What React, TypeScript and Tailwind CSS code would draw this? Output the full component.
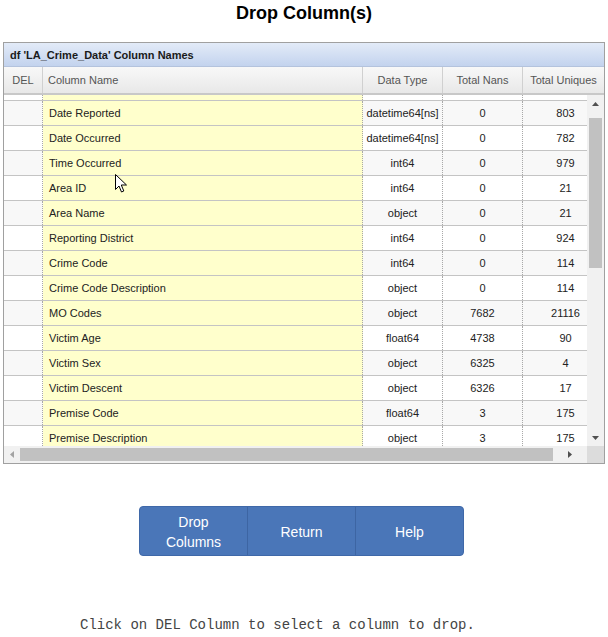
import React from "react"

type Row = { name: string; type: string; nans: string; uniques: string }

const rows: Row[] = [
  { name: "Date Reported", type: "datetime64[ns]", nans: "0", uniques: "803" },
  { name: "Date Occurred", type: "datetime64[ns]", nans: "0", uniques: "782" },
  { name: "Time Occurred", type: "int64", nans: "0", uniques: "979" },
  { name: "Area ID", type: "int64", nans: "0", uniques: "21" },
  { name: "Area Name", type: "object", nans: "0", uniques: "21" },
  { name: "Reporting District", type: "int64", nans: "0", uniques: "924" },
  { name: "Crime Code", type: "int64", nans: "0", uniques: "114" },
  { name: "Crime Code Description", type: "object", nans: "0", uniques: "114" },
  { name: "MO Codes", type: "object", nans: "7682", uniques: "21116" },
  { name: "Victim Age", type: "float64", nans: "4738", uniques: "90" },
  { name: "Victim Sex", type: "object", nans: "6325", uniques: "4" },
  { name: "Victim Descent", type: "object", nans: "6326", uniques: "17" },
  { name: "Premise Code", type: "float64", nans: "3", uniques: "175" },
  { name: "Premise Description", type: "object", nans: "3", uniques: "175" },
]

function Arrow({ dir, color }: { dir: "up" | "down" | "left" | "right"; color: string }) {
  const pts = {
    up: "0,4 3.5,0 7,4",
    down: "0,0 3.5,4 7,0",
    left: "4,0 0,3.5 4,7",
    right: "0,0 4,3.5 0,7",
  }[dir]
  const vertical = dir === "up" || dir === "down"
  return (
    <svg width={vertical ? 7 : 4} height={vertical ? 4 : 7} viewBox={vertical ? "0 0 7 4" : "0 0 4 7"}>
      <polygon points={pts} fill={color} />
    </svg>
  )
}

function Cells({ row }: { row?: Row }) {
  return (
    <>
      <div className="w-[39px] shrink-0 border-r border-dotted border-[#a8a8a8]" />
      <div className="w-[320px] shrink-0 flex items-center pl-[6px] bg-[#ffffcc] border-r border-dotted border-[#a8a8a8]">
        {row?.name}
      </div>
      <div className="w-[80px] shrink-0 flex items-center justify-center border-r border-dotted border-[#a8a8a8]">
        {row?.type}
      </div>
      <div className="w-[80px] shrink-0 flex items-center justify-center border-r border-dotted border-[#a8a8a8]">
        {row?.nans}
      </div>
      <div className="w-[85px] shrink-0 flex items-center justify-center">{row?.uniques}</div>
    </>
  )
}

export default function App() {
  return (
    <div className="relative w-[608px] h-[637px] bg-white font-['Liberation_Sans',Arial,sans-serif] text-[#222]">
      {/* Title */}
      <h1 className="h-[42px] pt-[3px] text-center text-[18px] leading-[21px] font-bold text-black">
        Drop Column(s)
      </h1>

      {/* Grid */}
      <div className="ml-[3px] w-[602px] border border-[#a0a0a0]">
        <div className="h-[24px] flex items-center pl-[6px] pt-[1px] bg-gradient-to-b from-[#e3ebf8] to-[#c3d3ee] border-b border-[#b4c3dd] text-[11px] font-bold text-[#1a1a1a]">
          df 'LA_Crime_Data' Column Names
        </div>

        {/* Header */}
        <div className="h-[28px] border-b-2 border-[#c8c8c8] bg-gradient-to-b from-[#f8f8f8] to-[#e8e8e8] text-[11px] text-[#555] overflow-hidden">
          <div className="flex w-[600px] h-full">
            <div className="w-[39px] shrink-0 flex items-center justify-center border-r border-[#d0d0d0]">DEL</div>
            <div className="w-[320px] shrink-0 flex items-center pl-[5px] border-r border-[#d0d0d0]">Column Name</div>
            <div className="w-[80px] shrink-0 flex items-center justify-center border-r border-[#d0d0d0]">Data Type</div>
            <div className="w-[80px] shrink-0 flex items-center justify-center border-r border-[#d0d0d0]">Total Nans</div>
            <div className="flex-1 flex items-center justify-center">Total Uniques</div>
          </div>
        </div>

        {/* Body */}
        <div className="flex h-[351px]">
          <div className="w-[583px] h-full overflow-hidden">
            <div className="w-[604px]">
              {/* bottom edge of the row scrolled above the view */}
              <div className="flex h-[6px] border-b border-[#c4c4c4] bg-white">
                <Cells />
              </div>
              {rows.map((r, i) => (
                <div
                  key={r.name}
                  className={`flex h-[25px] border-b border-[#c4c4c4] text-[11px] ${i % 2 === 0 ? "bg-[#f8f8f8]" : "bg-white"}`}
                >
                  <Cells row={r} />
                </div>
              ))}
            </div>
          </div>

          {/* Vertical scrollbar */}
          <div className="w-[17px] h-full bg-[#f1f1f1] flex flex-col items-center">
            <div className="h-[17px] w-full flex items-center justify-center">
              <Arrow dir="up" color="#505050" />
            </div>
            <div className="mt-[6px] w-[13px] h-[150px] bg-[#c1c1c1]" />
            <div className="flex-1" />
            <div className="h-[17px] w-full flex items-center justify-center">
              <Arrow dir="down" color="#505050" />
            </div>
          </div>
        </div>

        {/* Horizontal scrollbar */}
        <div className="flex h-[17px]">
          <div className="w-[583px] h-full bg-[#f1f1f1] flex items-center">
            <div className="w-[16px] h-full flex items-center justify-center">
              <Arrow dir="left" color="#a3a3a3" />
            </div>
            <div className="w-[533px] h-[13px] bg-[#c1c1c1]" />
            <div className="flex-1 h-full flex items-center justify-center">
              <Arrow dir="right" color="#505050" />
            </div>
          </div>
          <div className="w-[17px] h-full bg-[#dcdcdc]" />
        </div>
      </div>

      {/* Buttons */}
      <div className="mt-[42px] flex justify-center pr-[5px]">
        <div className="flex w-[325px] h-[50px] rounded-[4px] overflow-hidden border border-[#3f68a8] bg-[#4a76b8] text-white text-[14px] leading-[20px]">
          <button className="flex-1 pt-[2px] border-r border-[#3d65a3] text-center">
            Drop
            <br />
            Columns
          </button>
          <button className="flex-1 pt-[2px] border-r border-[#3d65a3] text-center">Return</button>
          <button className="flex-1 pt-[2px] text-center">Help</button>
        </div>
      </div>

      {/* Footer */}
      <p className="mt-[61px] pl-[80px] font-['Liberation_Mono','Courier_New',monospace] text-[14px] leading-[16px] text-[#444]">
        Click on DEL Column to select a column to drop.
      </p>

      {/* Mouse cursor overlay */}
      <svg className="absolute left-[115px] top-[174px]" width="13" height="19" viewBox="0 0 13 19">
        <path d="M0.5 0.5 L0.5 15.5 L4 12 L6.5 18 L8.8 17 L6.3 11 L11.5 11 Z" fill="white" stroke="black" strokeWidth="1" />
      </svg>
    </div>
  )
}
